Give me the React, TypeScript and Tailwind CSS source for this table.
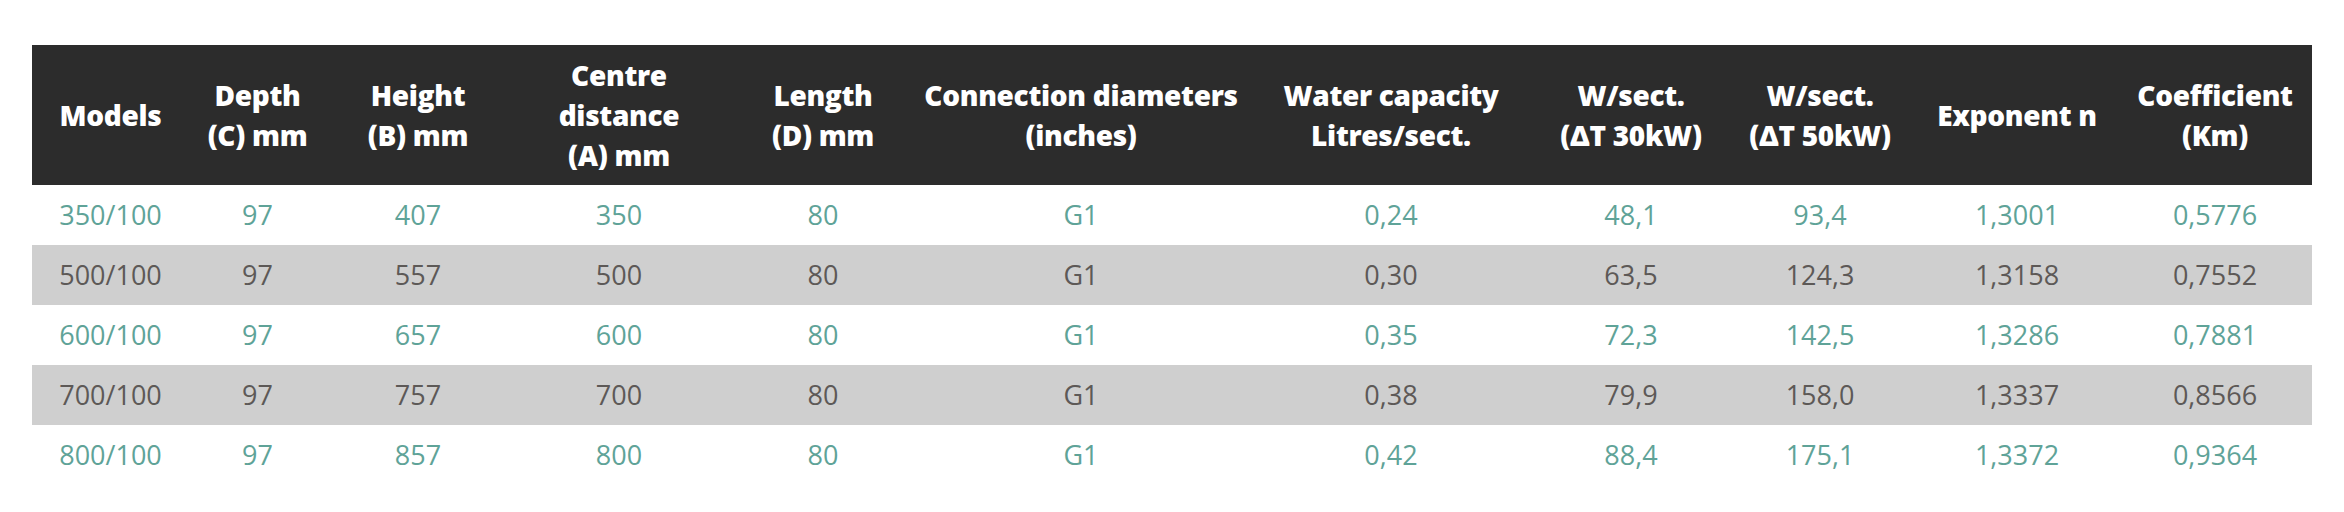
const headers: { label: string[]; w: string }[] = [
  { label: ["Models"], w: "w-[157px]" },
  { label: ["Depth", "(C) mm"], w: "w-[137px]" },
  { label: ["Height", "(B) mm"], w: "w-[184px]" },
  { label: ["Centre", "distance", "(A) mm"], w: "w-[218px]" },
  { label: ["Length", "(D) mm"], w: "w-[190px]" },
  { label: ["Connection diameters", "(inches)"], w: "w-[326px]" },
  { label: ["Water capacity", "Litres/sect."], w: "w-[294px]" },
  { label: ["W/sect.", "(ΔT 30kW)"], w: "w-[186px]" },
  { label: ["W/sect.", "(ΔT 50kW)"], w: "w-[192px]" },
  { label: ["Exponent n"], w: "w-[202px]" },
  { label: ["Coefficient", "(Km)"], w: "w-[194px]" },
];

const rows: string[][] = [
  ["350/100", "97", "407", "350", "80", "G1", "0,24", "48,1", "93,4", "1,3001", "0,5776"],
  ["500/100", "97", "557", "500", "80", "G1", "0,30", "63,5", "124,3", "1,3158", "0,7552"],
  ["600/100", "97", "657", "600", "80", "G1", "0,35", "72,3", "142,5", "1,3286", "0,7881"],
  ["700/100", "97", "757", "700", "80", "G1", "0,38", "79,9", "158,0", "1,3337", "0,8566"],
  ["800/100", "97", "857", "800", "80", "G1", "0,42", "88,4", "175,1", "1,3372", "0,9364"],
];

export default function App() {
  return (
    <div className="bg-white px-8 pt-[45px] h-[512px] font-['Open_Sans',sans-serif]">
      <table className="w-full table-fixed border-collapse">
        <thead>
          <tr className="bg-[#2c2c2c] h-[140px]">
            {headers.map((h, i) => (
              <th
                key={i}
                className={`${h.w} p-0 align-middle text-center text-white font-extrabold tracking-[-0.3px] text-[28px] leading-[40px]`}
              >
                {h.label.map((l, j) => (
                  <div key={j} className="whitespace-nowrap">
                    {l}
                  </div>
                ))}
              </th>
            ))}
          </tr>
        </thead>
        <tbody>
          {rows.map((r, i) => (
            <tr
              key={i}
              className={
                i % 2 === 0
                  ? "h-[60px] bg-white text-[#5fa398]"
                  : "h-[60px] bg-[#cfcfcf] text-[#5d5957]"
              }
            >
              {r.map((c, j) => (
                <td key={j} className="p-0 text-center align-middle text-[27px] leading-[40px]">
                  {c}
                </td>
              ))}
            </tr>
          ))}
        </tbody>
      </table>
    </div>
  );
}
